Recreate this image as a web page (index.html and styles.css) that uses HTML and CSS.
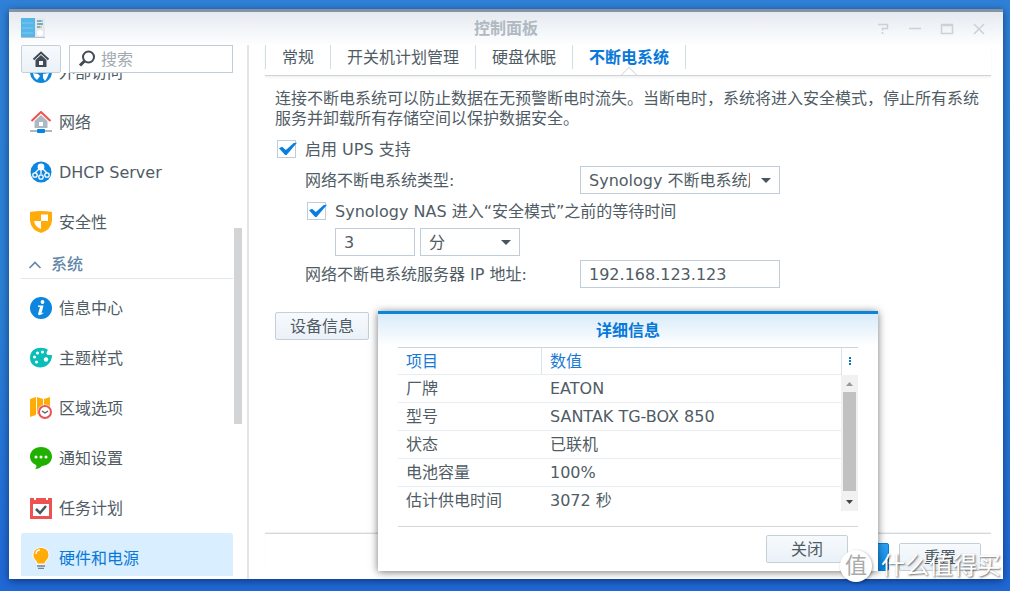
FILE: index.html
```html
<!DOCTYPE html>
<html lang="zh-CN">
<head>
<meta charset="utf-8">
<title>控制面板</title>
<link rel="stylesheet" href="styles.css">
</head>
<body>
<div class="window">
  <header class="titlebar">
    <svg class="app-icon" width="24" height="21" viewBox="0 0 24 21" aria-hidden="true">
      <rect x="0" y="0" width="24" height="20" fill="#e3e9ee"/>
      <rect x="0" y="0" width="14" height="19" fill="#56b5e9"/>
      <path d="M1 5h11M1 10h11M1 15h11" stroke="#7fcaf0"/>
      <path d="M16 3h4M16 6h6M16 9h3" stroke="#55636d"/>
      <path d="M19 3h3M18 6h3" stroke="#35b5e5"/>
      <path d="M17 9h4" stroke="#8cc84b"/>
      <circle cx="19" cy="15" r="3" fill="#fff"/>
      <path d="M0 19.500h24" stroke="#b4c2cc"/>
    </svg>
    <h1 class="title">控制面板</h1>
    <div class="window-controls">
      <button class="window-button" type="button" aria-label="帮助"><svg width="14" height="12" viewBox="0 0 14 12"><path d="M2 1.500h9.500v4H6.500v2M6.500 9v2" /></svg></button>
      <button class="window-button" type="button" aria-label="最小化"><svg width="14" height="12" viewBox="0 0 14 12"><path d="M1 5.500h12"/></svg></button>
      <button class="window-button" type="button" aria-label="最大化"><svg width="14" height="12" viewBox="0 0 14 12"><path d="M1.500 1.500h11v9h-11zM1 2.500h12"/></svg></button>
      <button class="window-button" type="button" aria-label="关闭窗口"><svg width="14" height="12" viewBox="0 0 14 12"><path d="M2 1l10 10M12 1L2 11"/></svg></button>
    </div>
  </header>
  <div class="content">
    <aside class="sidebar">
      <div class="tools">
        <button class="button home" type="button" aria-label="主页">
          <svg width="18" height="18" viewBox="0 0 18 18"><path d="M1.500 9.500L9 2.500l7.500 7" fill="none" stroke="#414b55" stroke-width="2"/><path d="M3.500 10L9 5l5.500 5v7h-11z" fill="#414b55"/><rect x="7" y="11" width="4" height="4" fill="#f3f8fc"/></svg>
        </button>
        <label class="search">
          <svg width="18" height="18" viewBox="0 0 18 18" aria-hidden="true"><circle cx="10.500" cy="7" r="5.500" fill="none" stroke="#414b55" stroke-width="2"/><path d="M6.500 11L2 15.500" stroke="#414b55" stroke-width="3"/></svg>
          <input class="search-input" type="search" placeholder="搜索" aria-label="搜索">
        </label>
      </div>
      <div class="nav-row">
        <nav class="nav">
          <a class="nav-item nav-first" href="#"><svg width="22" height="22" viewBox="0 0 22 22"><circle cx="11" cy="11" r="11" fill="#0d86e0"/><path d="M3 12l5 1 2 2-3 4-3-3zM13 13l6-1-2 5-2 3-2-3z" fill="#fff"/></svg><span>外部访问</span></a>
          <a class="nav-item" href="#"><svg width="22" height="22" viewBox="0 0 22 22"><path d="M4.500 10L11 4l6.500 6v7h-13z" fill="#adb9c2"/><path d="M1.500 10L11 1l9.500 9" fill="none" stroke="#ee5050" stroke-width="2"/><rect x="9" y="11" width="4" height="4" fill="#fff"/><path d="M0 20h22" stroke="#adb9c2" stroke-width="2"/><rect x="7" y="18" width="8" height="4" rx="1" fill="#0086e5"/></svg><span>网络</span></a>
          <a class="nav-item" href="#"><svg width="22" height="22" viewBox="0 0 22 22"><circle cx="11" cy="11" r="10.500" fill="#0d86e0"/><g fill="none" stroke="#fff" stroke-width="1.300"><path d="M9 8l-4 4M13 8l4 4M11 9v4"/><circle cx="5" cy="14" r="2.200"/><circle cx="11" cy="16" r="2.200"/><circle cx="17" cy="14" r="2.200"/></g><circle cx="11" cy="6" r="3.400" fill="#fff"/></svg><span>DHCP Server</span></a>
          <a class="nav-item" href="#"><svg width="22" height="22" viewBox="0 0 22 22"><path d="M0 1Q11-1 22 1V10Q21 19 11 22Q1 19 0 10z" fill="#ffac0a"/><path d="M11 3.500h7v6.500h-7zM4 10h7v8Q5 16 4 10z" fill="#fff"/></svg><span>安全性</span></a>
          <button class="nav-group" type="button"><svg width="14" height="10" viewBox="0 0 14 10"><path d="M1.500 8L7 2.500 12.500 8" fill="none" stroke="#6287a8" stroke-width="1.600"/></svg>系统</button>
          <a class="nav-item" href="#"><svg width="22" height="22" viewBox="0 0 22 22"><circle cx="11" cy="11" r="11" fill="#0d86e0"/><circle cx="12.500" cy="5" r="1.900" fill="#fff"/><path d="M8 8.500h5.500l-2 7.700 2-.8-.3 1.200Q7 20 8.300 16L10 10H8z" fill="#fff"/></svg><span>信息中心</span></a>
          <a class="nav-item" href="#"><svg width="22" height="22" viewBox="0 0 22 22"><path d="M18 3C13-1 0 0 0 11c0 13 22 13 22-3h-4c-2-1-2-3 0-5z" fill="#09bdb8"/><g fill="#fff"><circle cx="12.500" cy="5" r="1.600"/><circle cx="7.500" cy="6" r="1.600"/><circle cx="4.500" cy="10" r="1.600"/><circle cx="6.500" cy="15" r="1.600"/><circle cx="16" cy="12.500" r="2.200"/></g></svg><span>主题样式</span></a>
          <a class="nav-item" href="#"><svg width="22" height="22" viewBox="0 0 22 22"><path d="M0 2l6-2v18l-6 2zM7 0l6 2v16l-6-1zM14 2l6-2v17h-6z" fill="#ffac0a"/><circle cx="15" cy="15" r="7.500" fill="#fff"/><circle cx="15" cy="15" r="6" fill="#fff" stroke="#e95454" stroke-width="2"/><path d="M12 14l3 2 3-2" fill="none" stroke="#56626b" stroke-width="1.400"/></svg><span>区域选项</span></a>
          <a class="nav-item" href="#"><svg width="22" height="22" viewBox="0 0 22 22"><path d="M11 0c14 0 15 18 1 19-2 2-4 3-7 3 1-1 2-2 1-4C-4 14-1 0 11 0z" fill="#20b000"/><g fill="#fff"><circle cx="6" cy="10" r="1.500"/><circle cx="11" cy="10" r="1.500"/><circle cx="16" cy="10" r="1.500"/></g></svg><span>通知设置</span></a>
          <a class="nav-item" href="#"><svg width="22" height="22" viewBox="0 0 22 22"><path d="M0 1h22v21H0z" fill="#ed5151"/><path d="M3 7h16v12H3zM4 0h2v3H4zM16 0h2v3h-2z" fill="#fff"/><path d="M6 12l4 4 6-7" fill="none" stroke="#485660" stroke-width="2.500"/></svg><span>任务计划</span></a>
          <a class="nav-item nav-current" href="#" aria-current="page"><svg width="22" height="22" viewBox="0 0 22 22"><path d="M7 17c0-4-4-4-4-9C3-2 19-2 19 8c0 5-4 5-4 9z" fill="#ffac0a" stroke="#fff"/><path d="M6 7q0-4 4-4" fill="none" stroke="#fff" stroke-width="1.500"/><path d="M7 19h8M8 21.500h6" stroke="#73838f" stroke-width="1.500"/></svg><span>硬件和电源</span></a>
        </nav>
        <div class="nav-scroll"></div>
      </div>
    </aside>
    <main class="main">
      <nav class="tabs">
        <a class="tab" href="#">常规</a>
        <a class="tab" href="#">开关机计划管理</a>
        <a class="tab" href="#">硬盘休眠</a>
        <a class="tab tab-current" href="#" aria-current="page">不断电系统</a>
      </nav>
      <form class="form">
        <p class="intro">连接不断电系统可以防止数据在无预警断电时流失。当断电时，系统将进入安全模式，停止所有系统服务并卸载所有存储空间以保护数据安全。</p>
        <label class="check"><input class="tick" type="checkbox" checked><span>启用 UPS 支持</span></label>
        <div class="field indent">
          <label class="field-label" for="ups-type">网络不断电系统类型:</label>
          <span class="select-box wide"><select class="control select" id="ups-type"><option>Synology 不断电系统服务器</option></select></span>
        </div>
        <label class="check indent"><input class="tick" type="checkbox" checked><span>Synology NAS 进入“安全模式”之前的等待时间</span></label>
        <div class="wait-row">
          <input class="control number" type="text" value="3" aria-label="等待时间">
          <span class="select-box unit"><select class="control select" aria-label="时间单位"><option>分</option></select></span>
        </div>
        <div class="field indent">
          <label class="field-label" for="ups-ip">网络不断电系统服务器 IP 地址:</label>
          <input class="control wide" id="ups-ip" type="text" value="192.168.123.123">
        </div>
        <button class="button device" type="button">设备信息</button>
      </form>
      <footer class="actions">
        <button class="button primary" type="button" aria-label="应用"></button>
        <button class="button" type="button">重置</button>
      </footer>
    </main>
  </div>
  <section class="dialog" role="dialog" aria-labelledby="dialog-title">
    <h2 class="dialog-title" id="dialog-title">详细信息</h2>
    <div class="grid">
      <div class="table-view">
        <table class="table">
          <thead><tr><th class="name-column">项目</th><th>数值</th></tr></thead>
          <tbody>
            <tr><td>厂牌</td><td>EATON</td></tr>
            <tr><td>型号</td><td>SANTAK TG-BOX 850</td></tr>
            <tr><td>状态</td><td>已联机</td></tr>
            <tr><td>电池容量</td><td>100%</td></tr>
            <tr><td>估计供电时间</td><td>3072 秒</td></tr>
          </tbody>
        </table>
      </div>
      <div class="rail">
        <button class="column-menu" type="button" aria-label="列选项"><svg width="3" height="9" viewBox="0 0 3 9"><path d="M0 0h2v2H0zM0 3h2v2H0zM0 6h2v2H0z" fill="#0879b8"/></svg></button>
        <div class="scrollbar">
          <svg width="7" height="4" viewBox="0 0 7 4"><path d="M0 4L3.500 0 7 4z" fill="#999"/></svg>
          <div class="thumb"></div>
          <svg width="7" height="4" viewBox="0 0 7 4"><path d="M0 0l3.500 4L7 0z" fill="#444"/></svg>
        </div>
      </div>
    </div>
    <footer class="dialog-actions"><button class="button" type="button">关闭</button></footer>
  </section>
</div>
<div class="watermark"><span class="mark">值</span><span class="mark-text">什么值得买</span></div>
</body>
</html>
```
FILE: styles.css
```css
* { box-sizing: border-box; }
body {
  margin: 0;
  height: 100vh;
  padding: 9px 7px 12px 9px;
  overflow: hidden;
  background: linear-gradient(#2f80d7, #2b80d4 50%, #2068d6);
  color: #505c65;
  font: 400 16px/20px "DejaVu Sans", "Noto Sans CJK SC", sans-serif;
}
button, input, select { font: inherit; color: inherit; }
button { cursor: pointer; }
a { color: inherit; text-decoration: none; }
.window {
  position: relative;
  display: flex;
  flex-direction: column;
  height: 100%;
  border-top: 3px solid #8594a4;
  background: linear-gradient(#e5eaf0, #fff 34px);
  box-shadow: 0 2px 8px rgba(0, 20, 60, .6);
}
.titlebar {
  display: grid;
  grid-template-columns: 1fr auto 1fr;
  align-items: center;
  height: 33px;
  padding: 0 12px;
}
.title { margin: 0; font-size: 16px; font-weight: 700; color: #b0b9c2; }
.window-controls { display: flex; justify-content: flex-end; gap: 8px; }
.window-button { display: flex; justify-content: center; width: 24px; padding: 0; border: 0; background: none; }
.window-button svg { fill: none; stroke: #ccd1d6; stroke-width: 1.5; }
.content { display: flex; flex: 1; min-height: 0; }
.sidebar { display: flex; flex-direction: column; width: 240px; padding: 0 5px 0 12px; border-right: 2px solid #e2e4e6; }
.tools { display: flex; gap: 8px; padding-right: 9px; }
.button {
  width: 82px;
  height: 28px;
  padding: 2px 0 0;
  border: 1px solid #c3d0da;
  border-radius: 2px;
  background: linear-gradient(#f7fafd, #eaf1f7);
}
.home { display: grid; place-items: center; width: 40px; padding: 0; }
.search { display: flex; flex: 1; align-items: center; gap: 5px; height: 28px; padding-left: 8px; border: 1px solid #c0ccd8; background: #fff; }
.search-input { flex: 1; width: 0; padding: 1px 0 0; border: 0; outline: 0; background: none; }
.search-input::placeholder { color: #a1a9b1; opacity: 1; }
.nav-row { display: flex; flex: 1; min-height: 0; }
.nav { flex: 1; margin-bottom: 3px; overflow: hidden; }
.nav-item { display: flex; align-items: center; gap: 7px; height: 50px; padding-left: 9px; border-radius: 3px; }
.nav-item span, .check span, .field-label { padding-top: 2px; }
.nav-first { margin-top: -26px; }
.nav-current { background: #d9eeff; color: #0879d9; }
.nav-group {
  display: flex;
  align-items: center;
  gap: 9px;
  width: 100%;
  height: 32px;
  margin-bottom: 4px;
  padding: 4px 0 0 7px;
  border: 0;
  border-bottom: 1px solid #e0e8ee;
  background: none;
  color: #6287a8;
  font-weight: 500;
}
.nav-scroll { width: 8px; height: 196px; margin: 155px 0 0 1px; background: #d2d4d6; }
.main { display: flex; flex: 1; flex-direction: column; min-width: 0; padding: 0 12px 8px 16px; }
.tabs { display: flex; height: 31px; border-bottom: 1px solid #d0d3d6; box-shadow: 0 2px 2px #f2f3f4; }
.tab { height: 24px; padding: 3px 16px 0; border-right: 1px solid #d3dde4; }
.tab:first-child { border-left: 1px solid #d3dde4; }
.tab-current { position: relative; color: #0879d9; font-weight: 700; }
.tab-current::after {
  content: "";
  position: absolute;
  left: 50%;
  bottom: -12px;
  width: 11px;
  height: 11px;
  margin-left: -6px;
  border: solid #d0d3d6;
  border-width: 1px 0 0 1px;
  background: #fff;
  clip-path: polygon(0 0, 100% 0, 0 100%);
  transform: rotate(45deg);
}
.form { display: flex; flex: 1; flex-direction: column; gap: 3px; padding: 13px 10px 0; }
.intro { margin: 0 0 3px; }
.check { display: flex; align-items: center; gap: 9px; height: 28px; padding-left: 2px; }
.indent { margin-left: 30px; }
.tick { appearance: none; position: relative; width: 19px; height: 18px; margin: 0; border: 1px solid #c0ccd8; background: #fff; }
.tick:checked::after {
  content: "";
  position: absolute;
  inset: 1px -2px 2px 1px;
  background: #087fe0;
  clip-path: polygon(0 48%, 17% 36%, 38% 62%, 82% 8%, 100% 5%, 42% 100%, 34% 100%);
}
.field { display: flex; align-items: center; height: 28px; }
.field-label { width: 275px; }
.control { height: 28px; padding: 1px 8px 0; border: 1px solid #c0ccd8; border-radius: 0; background: #fff; outline: 0; }
.wide { width: 200px; }
.number { width: 80px; }
.select-box { position: relative; display: flex; }
.select-box::after {
  content: "";
  position: absolute;
  top: 12px;
  right: 9px;
  border: solid transparent;
  border-width: 5px 5px 0;
  border-top-color: #48555e;
  pointer-events: none;
}
.select { appearance: none; width: 100%; padding-top: 2px; padding-right: 29px; }
.unit { width: 100px; }
.wait-row { display: flex; gap: 5px; margin: 0 0 1px 60px; }
.device { width: 94px; margin-top: 21px; }
.actions { display: flex; justify-content: flex-end; gap: 10px; padding: 9px 10px 0; border-top: 1px solid #d5d7d9; box-shadow: 0 -1px 1px #f0f1f2; }
.primary { border-color: #087cd5; background: linear-gradient(#2ba1f5, #0885e5); color: #fff; }
.dialog {
  position: absolute;
  top: 299px;
  left: 369px;
  width: 500px;
  padding: 0 20px 8px;
  border-top: 3px solid #0a85da;
  background: linear-gradient(#d8ebf9, #fff 32px);
  box-shadow: 0 1px 8px rgba(0, 0, 0, .55);
}
.dialog-title { margin: 0; padding: 7px 0 6px; color: #0879d9; font-size: 16px; line-height: 20px; text-align: center; }
.grid { display: flex; height: 164px; border-top: 1px solid #c6d6e2; }
.table-view { flex: 1; overflow: hidden; }
.table { width: 100%; border-collapse: separate; border-spacing: 0; table-layout: fixed; }
.table th, .table td { height: 28px; padding: 0 8px; border-bottom: 1px solid #e7edf0; text-align: left; font-weight: inherit; }
.table th { height: 27px; padding-top: 2px; color: #187ad5; }
.table .name-column { width: 144px; border-right: 1px solid #d8e4ec; }
.table tr:last-child td { border-bottom: 0; }
.rail { display: flex; flex-direction: column; width: 17px; }
.column-menu { display: grid; place-items: center; height: 27px; padding: 0; border: 0; border-left: 1px solid #d8e4ec; background: none; }
.scrollbar { display: flex; flex: 1; flex-direction: column; align-items: center; gap: 6px; padding: 7px 0; background: #f1f1f1; }
.thumb { width: 13px; height: 99px; margin-bottom: 3px; background: #c1c1c1; }
.dialog-actions { display: flex; justify-content: flex-end; margin-top: 15px; padding: 8px 10px 0; border-top: 1px solid #d5d7d9; }
.watermark { position: absolute; right: 9px; bottom: 9px; display: flex; align-items: center; gap: 9px; color: #fff; pointer-events: none; }
.mark { width: 32px; height: 32px; border-radius: 50%; background: #fff; color: #aaa; font-size: 22px; line-height: 31px; text-align: center; box-shadow: 1px 1px 3px rgba(0, 0, 0, .35); }
.mark-text { font-size: 24px; line-height: 32px; font-weight: 400; text-shadow: 1px 1px 2px rgba(0, 0, 0, .6); }
```
